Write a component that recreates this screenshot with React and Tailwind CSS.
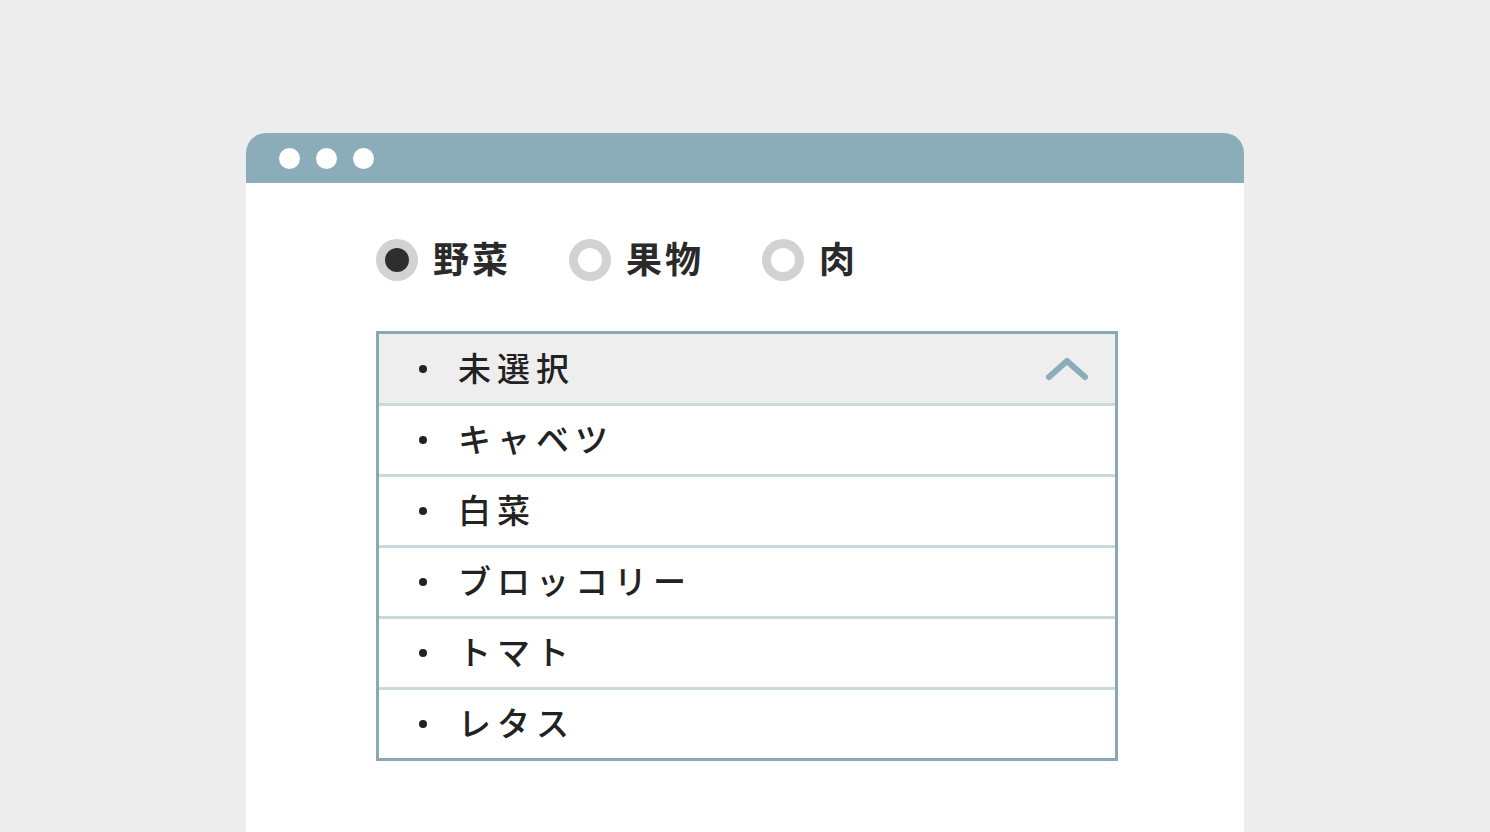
import React, { useState } from 'react';

const font = { fontFamily: '"Noto Sans CJK JP", "Noto Sans", sans-serif' };

const categories = ['野菜', '果物', '肉'];
const items = ['キャベツ', '白菜', 'ブロッコリー', 'トマト', 'レタス'];

const Radio = ({ label, checked, onClick }) => (
  <button type="button" onClick={onClick} className="flex items-center gap-[15px]">
    <span className="w-[42px] h-[42px] rounded-full bg-[#d2d2d2] flex items-center justify-center">
      <span className={`w-[24px] h-[24px] rounded-full ${checked ? 'bg-[#2e2e2e]' : 'bg-white'}`} />
    </span>
    <span className="text-[36px] leading-none font-bold tracking-[3px] text-[#2a2a2a] pb-[6px]">{label}</span>
  </button>
);

const Row = ({ children, head }) => (
  <div className={`flex items-center pl-[40px] pr-[26px] ${head ? 'h-[69px] bg-[#eeeeee]' : 'h-[71px] bg-white border-t-[3px] border-[#c9dadf]'}`}>
    <span className="w-[8px] h-[8px] rounded-full bg-[#222] shrink-0" />
    <span className="ml-[31px] text-[33px] leading-none font-medium tracking-[6px] text-[#222] pb-[3px]">{children}</span>
    {head && (
      <svg className="ml-auto" width="44" height="28" viewBox="0 0 44 28" fill="none">
        <path d="M4 22 L22 6 L40 22" stroke="#8aadb9" strokeWidth="6" strokeLinecap="round" strokeLinejoin="round" />
      </svg>
    )}
  </div>
);

export default function App() {
  const [cat, setCat] = useState(0);

  return (
    <div className="w-full h-[832px] overflow-hidden bg-[#ededed] pt-[133px]" style={font}>
      <div className="ml-[246px] w-[998px] h-[699px] bg-white rounded-t-[20px] overflow-hidden">
        {/* title bar */}
        <div className="h-[50px] bg-[#8badb9] flex items-center gap-[16px] pl-[33px]">
          <span className="w-[21px] h-[21px] rounded-full bg-white" />
          <span className="w-[21px] h-[21px] rounded-full bg-white" />
          <span className="w-[21px] h-[21px] rounded-full bg-white" />
        </div>

        <div className="pl-[130px] pt-[56px]">
          <div className="flex items-center gap-[58px]">
            {categories.map((c, i) => (
              <Radio key={c} label={c} checked={cat === i} onClick={() => setCat(i)} />
            ))}
          </div>

          <div className="mt-[50px] w-[742px] border-[3px] border-[#8aa9b4]">
            <Row head>未選択</Row>
            {items.map((it) => (
              <Row key={it}>{it}</Row>
            ))}
          </div>
        </div>
      </div>
    </div>
  );
}
